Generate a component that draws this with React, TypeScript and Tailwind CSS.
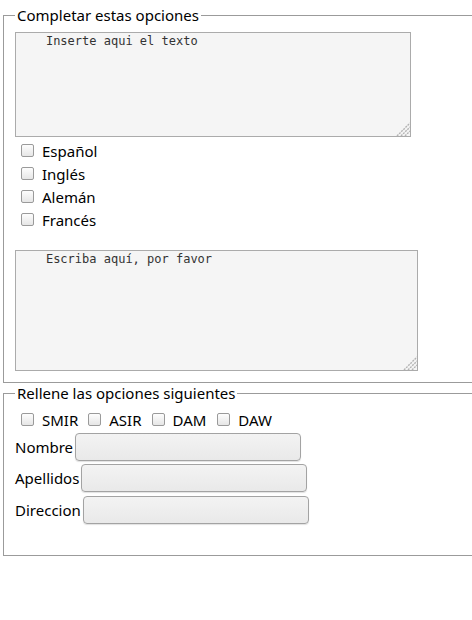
import React from "react";

const cb =
  "appearance-none w-[13px] h-[13px] shrink-0 border border-[#9a9a9a] rounded-[2px] bg-[linear-gradient(#fdfdfd,#e6e6e6)]";

function Row({ label }: { label: string }) {
  return (
    <div className="flex items-center h-[23px]">
      <input type="checkbox" className={`${cb} ml-[6px] mb-[2px]`} />
      <span className="ml-[8px]">{label}</span>
    </div>
  );
}

const inp =
  "ml-[2px] w-[226px] h-[28px] border border-[#a3a3a3] rounded-[4px] bg-[linear-gradient(#f3f3f3,#e9e9e9)] shadow-[0_1px_1px_rgba(0,0,0,0.12)]";

const ta =
  "block border border-[#ababab] bg-[#f5f5f5] pl-[1px] pr-[2px] pt-[2px] font-['DejaVu_Sans_Mono',monospace] text-[12px] leading-[13px] text-[#333] resize-none outline-none";

function Grip() {
  return (
    <svg
      className="absolute right-[1px] bottom-[1px]"
      width="14"
      height="14"
      viewBox="0 0 14 14"
    >
      <g stroke="#b4b4b4" strokeWidth="1.4" strokeDasharray="2 1">
        <line x1="1" y1="14" x2="14" y2="1" />
        <line x1="5" y1="14" x2="14" y2="5" />
        <line x1="9" y1="14" x2="14" y2="9" />
      </g>
    </svg>
  );
}

export default function App() {
  return (
    <div className="w-[472px] h-[620px] overflow-hidden bg-white text-black font-['Noto_Sans',sans-serif] text-[15px] pt-[5px]">
      <fieldset className="ml-[3px] w-[520px] border border-[#9b9b9b] pl-[11px] pt-[7px] pb-[11px]">
        <legend className="px-[2px] leading-[20px]">Completar estas opciones</legend>
        <div className="relative w-fit">
          <textarea
            className={`${ta} w-[396px] h-[105px]`}
            defaultValue={"    Inserte aqui el texto"}
          />
          <Grip />
        </div>
        <div className="mt-[3px]">
          <Row label="Español" />
          <Row label="Inglés" />
          <Row label="Alemán" />
          <Row label="Francés" />
        </div>
        <div className="relative w-fit mt-[18px]">
          <textarea
            className={`${ta} w-[403px] h-[121px]`}
            defaultValue={"    Escriba aquí, por favor"}
          />
          <Grip />
        </div>
      </fieldset>
      <fieldset className="ml-[3px] w-[520px] border border-[#9b9b9b] pl-[11px] pt-[6px] pb-[31px]">
        <legend className="px-[2px] leading-[20px]">Rellene las opciones siguientes</legend>
        <div className="flex items-center h-[23px]">
          <input type="checkbox" className={`${cb} ml-[6px] mb-[2px]`} />
          <span className="ml-[8px]">SMIR</span>
          <input type="checkbox" className={`${cb} ml-[10px] mb-[2px]`} />
          <span className="ml-[8px]">ASIR</span>
          <input type="checkbox" className={`${cb} ml-[10px] mb-[2px]`} />
          <span className="ml-[8px]">DAM</span>
          <input type="checkbox" className={`${cb} ml-[11px] mb-[2px]`} />
          <span className="ml-[8px]">DAW</span>
        </div>
        <div className="flex items-center mt-[1px]">
          <span>Nombre</span>
          <input type="text" className={inp} />
        </div>
        <div className="flex items-center mt-[3px]">
          <span>Apellidos</span>
          <input type="text" className={inp} />
        </div>
        <div className="flex items-center mt-[4px]">
          <span>Direccion</span>
          <input type="text" className={inp} />
        </div>
      </fieldset>
    </div>
  );
}
